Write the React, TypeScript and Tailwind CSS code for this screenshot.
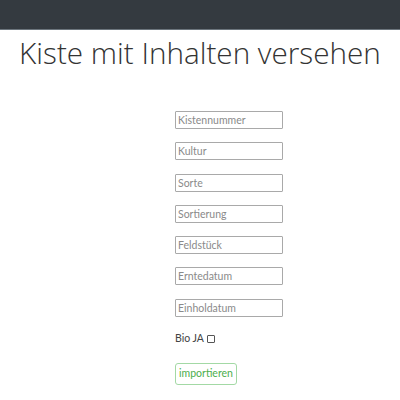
import React from "react";

const fields = ["Kistennummer", "Kultur", "Sorte", "Sortierung", "Feldstück", "Erntedatum", "Einholdatum"];

export default function App() {
  return (
    <div className="w-[400px] h-[400px] bg-white overflow-hidden" style={{ fontFamily: 'Lato, "Open Sans", sans-serif' }}>
      <div className="h-[30px] bg-[#343a40] border-b border-[#6c757d]" />
      <h1
        className="text-center text-[29.7px] font-light leading-[40px] text-[#333] mt-[3px]"
        style={{ fontFamily: '"Open Sans", "Noto Sans", sans-serif' }}
      >
        Kiste mit Inhalten versehen
      </h1>
      <div className="pl-[175px] pt-[38px] flex flex-col gap-[13.3px]">
        {fields.map((f) => (
          <input
            key={f}
            placeholder={f}
            className="w-[108px] h-[18px] border border-[#a9a9a9] rounded-[1px] px-[2px] text-[10.5px] text-[#333] placeholder:text-[#8a8a8a] outline-none"
          />
        ))}
        <div className="flex items-center gap-[3px] text-[10.5px] text-[#444] mt-[1px]">
          <span>Bio JA</span>
          <input type="checkbox" className="appearance-none w-[8px] h-[8px] m-0 border border-[#555] rounded-[1px] bg-white" />
        </div>
        <button className="mt-[3px] w-[62px] h-[22px] border border-[#a3d9a5] rounded-[3px] text-[#4cae4c] text-[10.5px] bg-white">importieren</button>
      </div>
    </div>
  );
}
